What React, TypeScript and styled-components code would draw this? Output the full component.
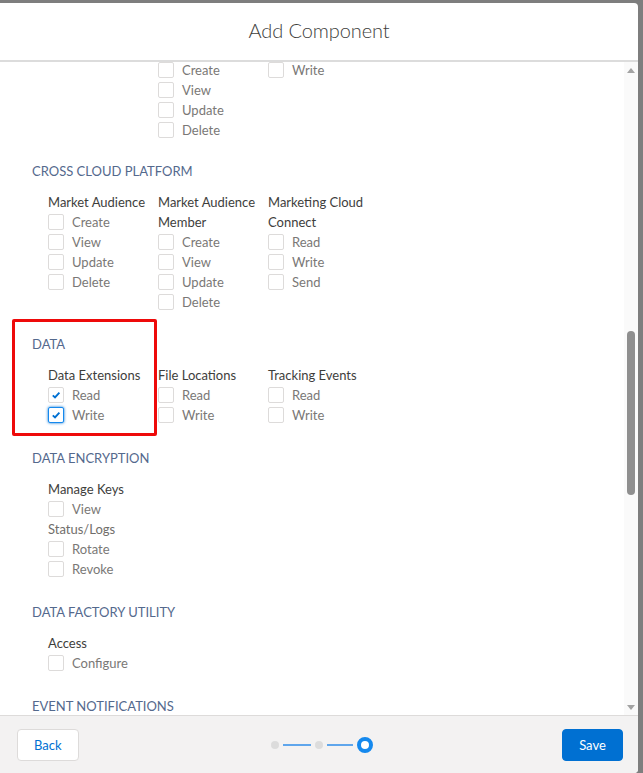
import React from "react";
import styled, { createGlobalStyle } from "styled-components";

const GlobalStyle = createGlobalStyle`
  html, body {
    margin: 0;
    padding: 0;
    background: #7e7e7e;
    font-family: Lato, "Open Sans", "Liberation Sans", sans-serif;
  }
  * { box-sizing: border-box; }
`;

type Entry =
  | { kind: "title"; text: string; muted?: boolean }
  | { kind: "check"; text: string; checked?: boolean; focused?: boolean };

type Section = {
  heading?: string;
  columns: Entry[][];
  highlight?: boolean;
  offsetTop?: number;
  gap?: number;
};

const t = (text: string, muted?: boolean): Entry => ({ kind: "title", text, muted });
const c = (text: string, checked?: boolean, focused?: boolean): Entry => ({
  kind: "check",
  text,
  checked,
  focused,
});

const sections: Section[] = [
  {
    offsetTop: -2,
    gap: 21,
    columns: [[], [c("Create"), c("View"), c("Update"), c("Delete")], [c("Write")]],
  },
  {
    heading: "Cross Cloud Platform",
    gap: 22,
    columns: [
      [t("Market Audience"), c("Create"), c("View"), c("Update"), c("Delete")],
      [t("Market Audience Member"), c("Create"), c("View"), c("Update"), c("Delete")],
      [t("Marketing Cloud Connect"), c("Read"), c("Write"), c("Send")],
    ],
  },
  {
    heading: "Data",
    highlight: true,
    columns: [
      [t("Data Extensions"), c("Read", true), c("Write", true, true)],
      [t("File Locations"), c("Read"), c("Write")],
      [t("Tracking Events"), c("Read"), c("Write")],
    ],
  },
  {
    heading: "Data Encryption",
    columns: [[t("Manage Keys"), c("View"), t("Status/Logs", true), c("Rotate"), c("Revoke")]],
  },
  {
    heading: "Data Factory Utility",
    columns: [[t("Access"), c("Configure")]],
  },
  {
    heading: "Event Notifications",
    columns: [],
  },
];

const ROW = 20;

const Backdrop = styled.div`
  height: 773px;
  padding: 3px 5px 0 0;
  display: flex;
`;

const Modal = styled.div`
  flex: 1;
  display: flex;
  flex-direction: column;
  background: #fff;
  border-radius: 0 4px 4px 0;
  overflow: hidden;
`;

const Header = styled.header`
  height: 59px;
  flex-shrink: 0;
  display: flex;
  align-items: center;
  justify-content: center;
  border-bottom: 2px solid #dcdcdc;
  padding-bottom: 4px;
`;

const Title = styled.h2`
  margin: 0;
  font-size: 20px;
  font-weight: 300;
  color: #3e3e3c;
  letter-spacing: -0.1px;
`;

const Body = styled.div`
  flex: 1;
  display: flex;
  min-height: 0;
`;

const Content = styled.div`
  flex: 1;
  overflow: hidden;
  padding-left: 32px;
`;

const SectionBlock = styled.section<{ $offset?: number; $gap?: number }>`
  position: relative;
  margin-top: ${(p) => p.$offset ?? 0}px;
  margin-bottom: ${(p) => p.$gap ?? 23}px;
`;

const Heading = styled.h3`
  margin: 0 0 11px;
  height: 20px;
  line-height: 20px;
  font-size: 13px;
  font-weight: 400;
  text-transform: uppercase;
  color: #54698d;
`;

const Columns = styled.div`
  display: flex;
  padding-left: 16px;
`;

const Column = styled.div`
  width: 110px;
  display: flex;
  flex-direction: column;
`;

const GroupTitle = styled.div<{ $muted?: boolean }>`
  font-size: 13px;
  line-height: ${ROW}px;
  color: ${(p) => (p.$muted ? "#706e6b" : "#3e3e3c")};
`;

const CheckRow = styled.label`
  display: flex;
  align-items: center;
  gap: 8px;
  height: ${ROW}px;
  font-size: 13px;
  color: #7a7876;
`;

const Box = styled.span<{ $focused?: boolean }>`
  width: 16px;
  height: 16px;
  flex-shrink: 0;
  display: flex;
  align-items: center;
  justify-content: center;
  background: #fff;
  border: 1px solid ${(p) => (p.$focused ? "#1589ee" : "#dddbda")};
  border-radius: 2px;
  box-shadow: ${(p) => (p.$focused ? "0 0 3px #0070d2" : "none")};
`;

const Highlight = styled.div`
  position: absolute;
  left: -20px;
  top: -15px;
  width: 145px;
  height: 117px;
  border: 3px solid #ee0a0a;
  border-radius: 2px;
  pointer-events: none;
`;

const ScrollTrack = styled.div`
  width: 14px;
  flex-shrink: 0;
  background: #fafafa;
  display: flex;
  flex-direction: column;
  align-items: center;
`;

const Arrow = styled.div<{ $down?: boolean }>`
  height: 16px;
  width: 100%;
  display: flex;
  align-items: center;
  justify-content: center;
  &::after {
    content: "";
    border-left: 4px solid transparent;
    border-right: 4px solid transparent;
    ${(p) =>
      p.$down ? "border-top: 5px solid #a3a3a3;" : "border-bottom: 5px solid #a3a3a3;"}
  }
`;

const Thumb = styled.div`
  margin-top: 253px;
  width: 8px;
  height: 164px;
  border-radius: 4px;
  background: #8f8f8f;
`;

const Spacer = styled.div`
  flex: 1;
`;

const Footer = styled.footer`
  height: 58px;
  flex-shrink: 0;
  display: flex;
  align-items: center;
  justify-content: space-between;
  padding: 0 15px 0 17px;
  background: #f3f2f2;
  border-top: 1px solid #dddbda;
`;

const Button = styled.button<{ $brand?: boolean }>`
  height: 32px;
  padding: 0 16px;
  font-family: inherit;
  font-size: 13px;
  border-radius: 4px;
  border: 1px solid ${(p) => (p.$brand ? "#0070d2" : "#dddbda")};
  background: ${(p) => (p.$brand ? "#0070d2" : "#fff")};
  color: ${(p) => (p.$brand ? "#fff" : "#0070d2")};
  min-width: 61px;
`;

const Progress = styled.div`
  display: flex;
  align-items: center;
  margin-left: 4px;
`;

const Dot = styled.span`
  width: 8px;
  height: 8px;
  border-radius: 50%;
  background: #dcdcdc;
`;

const Line = styled.span<{ $w: number }>`
  width: ${(p) => p.$w}px;
  height: 2px;
  margin: 0 4px;
  background: #5fa6ec;
`;

const Ring = styled.span`
  width: 16px;
  height: 16px;
  border-radius: 50%;
  border: 4px solid #1589ee;
  background: #fff;
`;

const Check = () => (
  <svg width="10" height="10" viewBox="0 0 10 10">
    <path d="M1.8 5.4 L4 7.4 L8.4 2.6" fill="none" stroke="#0070d2" strokeWidth="1.9" />
  </svg>
);

const EntryView = ({ entry }: { entry: Entry }) =>
  entry.kind === "title" ? (
    <GroupTitle $muted={entry.muted}>{entry.text}</GroupTitle>
  ) : (
    <CheckRow>
      <Box $focused={entry.focused}>{entry.checked && <Check />}</Box>
      {entry.text}
    </CheckRow>
  );

const App = () => {
  return (
    <>
      <GlobalStyle />
      <Backdrop>
        <Modal>
          <Header>
            <Title>Add Component</Title>
          </Header>
          <Body>
            <Content>
              {sections.map((s, i) => (
                <SectionBlock key={i} $offset={s.offsetTop} $gap={s.gap}>
                  {s.highlight && <Highlight />}
                  {s.heading && <Heading>{s.heading}</Heading>}
                  <Columns>
                    {s.columns.map((col, j) => (
                      <Column key={j}>
                        {col.map((e, k) => (
                          <EntryView key={k} entry={e} />
                        ))}
                      </Column>
                    ))}
                  </Columns>
                </SectionBlock>
              ))}
            </Content>
            <ScrollTrack>
              <Arrow />
              <Thumb />
              <Spacer />
              <Arrow $down />
            </ScrollTrack>
          </Body>
          <Footer>
            <Button>Back</Button>
            <Progress>
              <Dot />
              <Line $w={28} />
              <Dot />
              <Line $w={26} />
              <Ring />
            </Progress>
            <Button $brand>Save</Button>
          </Footer>
        </Modal>
      </Backdrop>
    </>
  );
};

export default App;
